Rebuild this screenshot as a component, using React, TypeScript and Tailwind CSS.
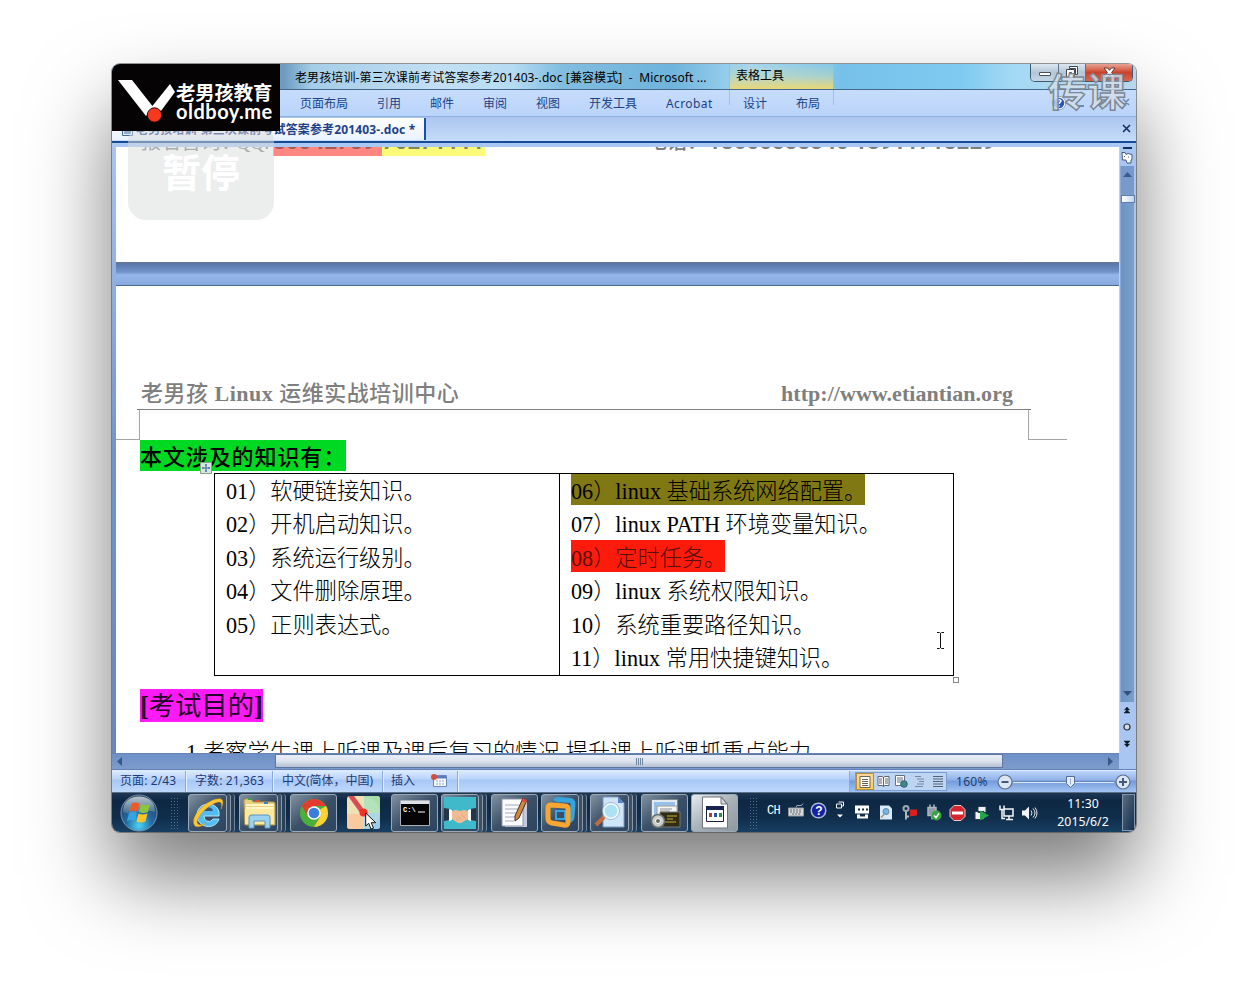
import React from 'react';

type Kids = { children?: React.ReactNode };

const UI = "font-['Noto_Sans','Noto_Sans_CJK_SC',sans-serif]";
const SERIF = "font-['Liberation_Serif','Noto_Sans_CJK_SC',serif]";

function Logo() {
  return (
    <div className="absolute left-0 top-0 z-20 flex h-[67px] w-[168px] rounded-tl-[8px] bg-[#060304] pl-[5px]">
      <svg className="mt-[15px] h-[46px] w-[60px] shrink-0" viewBox="0 0 60 46">
        <path d="M1 1h14l22 28-8 8z" fill="#fff" />
        <path d="M53 5l5 8-17 23-8-6z" fill="#fff" />
        <circle cx="37.500" cy="36" r="7.200" fill="#f8371f" stroke="#210808" />
      </svg>
      <div className="-ml-[1px] pt-[18px] text-white">
        <div className="whitespace-nowrap font-['Noto_Sans_CJK_SC',sans-serif] text-[19.3px] font-bold leading-[20px]">老男孩教育</div>
        <div className="whitespace-nowrap font-['Lato',sans-serif] text-[20px] font-bold leading-[19px] tracking-[0.5px]">oldboy.me</div>
      </div>
    </div>
  );
}

function PauseBadge() {
  return (
    <div className="absolute left-[16px] top-[60px] z-10 flex h-[96px] w-[146px] items-start justify-center rounded-[18px] bg-[#d9dbdc]/50 pt-[25px]">
      <span className="font-['Noto_Sans_CJK_SC',sans-serif] text-[39px] font-bold leading-[42px] text-white">暂停</span>
    </div>
  );
}

function TitleBar() {
  return (
    <div className="flex h-[26px] shrink-0 border-b border-[#45688f] bg-[linear-gradient(90deg,#78b9df_0px,#6d9cc0_172px,#a5cde8_200px,#c4e0f3_330px,#b5dcf2_400px,#81bde0_450px,#6fb4dc_560px,#a6d8f3_640px,#76c1ea_730px,#7fcaf1_850px,#a4d9f4_900px,#b9d7ec_1024px)]">
      <div className={`${UI} w-[617px] whitespace-pre pl-[183px] pt-[5px] text-[12px] leading-[18px] tracking-[0.11px] text-black`}>老男孩培训-第三次课前考试答案参考201403-.doc [兼容模式]  -  Microsoft ...</div>
      <div className={`${UI} w-[105px] border-x border-[#9dbdd5] bg-gradient-to-b from-[#9fcfe0]/30 via-[#c6d8b3]/60 to-[#e9d875] pl-[6px] pt-[3px] text-[12px] leading-[18px] text-black`}>表格工具</div>
      <div className="ml-[196px] flex h-[18px] w-[103px] overflow-hidden rounded-b-[5px] border border-t-0 border-[#43586d]">
        <div className="flex w-[28px] items-center justify-center border-r border-[#5e7387] bg-gradient-to-b from-[#dce7f0] via-[#b4c6d5] to-[#c5d7e6]">
          <div className="mt-[3px] h-[4px] w-[12px] rounded-[1px] border border-[#43505d] bg-white" />
        </div>
        <div className="flex w-[27px] items-center justify-center border-r border-[#5e7387] bg-gradient-to-b from-[#dce7f0] via-[#b4c6d5] to-[#c5d7e6] pb-[2px]">
          <svg width="12" height="12" viewBox="0 0 12 12"><path d="M3.500.500h8v8h-2v-6h-6zM.500 3.500h8v8h-8z" fill="#fff" stroke="#3c4753" /><path d="M3.500 6.500h2v2h-2z" fill="#b4c6d5" stroke="#3c4753" /></svg>
        </div>
        <div className="flex flex-1 items-center justify-center bg-gradient-to-b from-[#e5a294] via-[#cc422c] to-[#d9634c] pb-px">
          <svg width="13" height="11" viewBox="0 0 13 11"><path d="M1 1h3.500l2 2.300L8.500 1H12L8.600 5.500 12 10H8.500l-2-2.300L4.500 10H1l3.400-4.500z" fill="#fff" stroke="#55302b" strokeWidth=".9" /></svg>
        </div>
      </div>
    </div>
  );
}

function RibbonTabs() {
  return (
    <div className={`${UI} flex h-[27px] shrink-0 border-b border-[#8fb0df] bg-gradient-to-b from-[#c7dcfb] to-[#b9d4fa] pl-[188px] text-[12px] leading-[27px] text-[#1d4285]`}>
      <span className="w-[77px]">页面布局</span>
      <span className="w-[53px]">引用</span>
      <span className="w-[53px]">邮件</span>
      <span className="w-[53px]">审阅</span>
      <span className="w-[53px]">视图</span>
      <span className="w-[77px]">开发工具</span>
      <span className="w-[63px] tracking-[0.4px]">Acrobat</span>
      <div className="flex h-[15px] w-[105px] shrink-0 border-x border-[#a2bfe2] pl-[13px]">
        <span className="w-[53px]">设计</span>
        <span>布局</span>
      </div>
      <svg className="ml-[210px] mt-[6px] shrink-0" width="90" height="16" viewBox="0 0 90 16">
        <circle cx="15" cy="7" r="6" fill="#2757bd" stroke="#fff" strokeWidth="1.500" />
        <circle cx="15" cy="7" r="6.700" fill="none" stroke="#5272ab" strokeWidth=".6" />
        <path d="M13 5q2-3 4 0c0 1-2 1.500-2 3m0 1.200v1.500" stroke="#fff" strokeWidth="1.500" fill="none" />
        <path d="M33 10h7" stroke="#52709f" strokeWidth="1.500" />
        <path d="M56 4h6v6h-6zM79 3l6 6m0-6l-6 6" stroke="#6c87ad" strokeWidth="1.500" fill="none" />
      </svg>
    </div>
  );
}

function DocTabs() {
  return (
    <div className="flex h-[26px] shrink-0 border-b-2 border-[#164a94] bg-gradient-to-b from-[#abc6ee] to-[#c5dbf9] pt-[1px]">
      <div className={`${UI} flex h-[22px] w-[314px] items-center whitespace-nowrap border-r-2 border-[#164fae] bg-gradient-to-b from-white to-[#e9f2ff] pt-px text-[12px] font-bold tracking-[0.14px] text-[#1f4286]`}>
        <svg className="ml-[7px] mr-[3px] shrink-0" width="14" height="14" viewBox="0 0 14 14"><path d="M3.500 3.500h10v9h-10zM.500.500h9v7h-9z" fill="#e8f0fc" stroke="#44689f" /><path d="M5 8h7m-7 2h7" stroke="#44689f" /></svg>
        <span>老男孩培训-第三次课前考试答案参考201403-.doc *</span>
      </div>
      <svg className="ml-[696px] mt-[6px]" width="10" height="10" viewBox="0 0 10 10"><path d="M1 1l7 7m0-7L1 8" stroke="#12305f" strokeWidth="1.600" /></svg>
    </div>
  );
}

function Watermark() {
  return (
    <div className="absolute left-[936px] top-[2px] z-20 whitespace-nowrap font-['Noto_Sans_CJK_SC',sans-serif] text-[39px] font-bold leading-[46px] text-[#d3dfec]/80 [-webkit-text-stroke:1.4px_#7b8794]">传课</div>
  );
}

function Row({ children }: Kids) {
  return <div className="flex h-[33.4px] items-start">{children}</div>;
}

function Line({ children }: Kids) {
  return <span className="h-[31px] whitespace-pre leading-[36px]">{children}</span>;
}

function Page() {
  return (
    <div className={`${SERIF} flex h-[606px] w-[1003px] shrink-0 flex-col overflow-hidden bg-white`}>
      <div className="h-[115px] shrink-0 overflow-hidden">
        <div className="-mt-[22px] flex h-[31px] pl-[25px] font-['Roboto','Noto_Sans_CJK_SC',sans-serif] text-[22.3px] font-bold leading-[34px] text-[#7d7d7d]">
          <span className={`${SERIF} w-[95px] whitespace-nowrap text-[20px] font-normal`}>报名咨询：</span>
          <span className={`${SERIF} w-[37px] whitespace-nowrap text-[20px] font-normal tracking-[-0.5px]`}>QQ:</span>
          <span className="w-[109px] whitespace-nowrap bg-[#fe8781] leading-[32px] text-[#a55a57]">80042789</span>
          <span className="w-[103px] whitespace-nowrap bg-[#fcfb79] leading-[32px] text-[#85855a]">70271111</span>
          <span className={`${SERIF} ml-[162px] w-[61px] whitespace-nowrap text-[20px] font-medium`}>电话：</span>
          <span className="whitespace-nowrap leading-[32px]">18600338340 18911718229</span>
        </div>
      </div>
      <div className="h-[24px] shrink-0 border-b border-t border-b-[#4c6793] border-t-[#6d7787] bg-[linear-gradient(180deg,#5875a6_0px,#7093ca_9px,#96b7ec_12px,#86a9df_22px)]" />
      <div className="flex h-[123px] shrink-0 items-end justify-between pl-[25px] pr-[106px] text-[22px] font-medium leading-[30px] text-[#7f7f7f]">
        <span className="whitespace-nowrap tracking-[0.5px]">老男孩 <b>Linux</b> 运维实战培训中心</span>
        <b className="whitespace-nowrap tracking-[0.04px]">http://www.etiantian.org</b>
      </div>
      <div className="ml-[21px] h-px w-[894px] shrink-0 bg-[#808080]" />
      <div className="flex h-[30px] shrink-0">
        <div className="w-[24px] border-b border-r border-[#a5a5a5]" />
        <div className="w-[888px]" />
        <div className="w-[39px] border-b border-l border-[#a5a5a5]" />
      </div>
      <div className="ml-[24px] h-[31px] w-[206px] shrink-0 whitespace-nowrap bg-[#00d921] text-[22px] font-medium leading-[35px] tracking-[0.9px] text-black">本文涉及的知识有：</div>
      <div className="ml-[98px] mt-[2px] flex h-[203px] w-[740px] shrink-0 border border-black text-[22.2px] font-light text-black">
        <div className="w-[345px] border-r border-black pl-[11px]">
          <Row><Line>01）软硬链接知识。</Line></Row>
          <Row><Line>02）开机启动知识。</Line></Row>
          <Row><Line>03）系统运行级别。</Line></Row>
          <Row><Line>04）文件删除原理。</Line></Row>
          <Row><Line>05）正则表达式。</Line></Row>
        </div>
        <div className="pl-[11px]">
          <Row><div className="h-[31px] w-[294px] bg-[#807813]"><Line>06）linux 基础系统网络配置。</Line></div></Row>
          <Row><Line>07）linux PATH 环境变量知识。</Line></Row>
          <Row><div className="-mt-px h-[32px] w-[154px] bg-[#ff1b0c] pt-px text-[#54100b]"><Line>08）定时任务。</Line></div></Row>
          <Row><Line>09）linux 系统权限知识。</Line></Row>
          <Row><Line>10）系统重要路径知识。</Line></Row>
          <Row><Line>11）linux 常用快捷键知识。</Line></Row>
        </div>
      </div>
      <div className="ml-[24px] mt-[13px] h-[33px] w-[123px] shrink-0 whitespace-nowrap bg-[#ff1bf8] text-[26.300px] leading-[35px] text-[#25042b]"><b>[</b>考试目的<b>]</b></div>
      <div className="ml-[70px] mt-[12px] shrink-0 whitespace-nowrap text-[22.200px] font-light leading-[38px] tracking-[0.13px] text-black">1.考察学生课上听课及课后复习的情况,提升课上听课抓重点能力</div>
    </div>
  );
}

function VScroll() {
  return (
    <div className="flex w-[16px] flex-col items-center bg-[#a9c6f2] pr-[2px]">
      <div className="h-[2px] w-[9px] shrink-0 bg-[#12305f]" />
      <svg className="my-[2px] h-[13px] shrink-0" width="12" height="13" viewBox="0 0 12 13"><path d="M1 1.500h3l1 2 2-1 4 1v5l-1 .5v3H6l-1-3H1.500z" fill="#fff" stroke="#44597f" /><path d="M3.500 5v1m4-.5v1" stroke="#44597f" /></svg>
      <div className="flex h-[536px] w-[14px] shrink-0 flex-col items-center border-l border-[#89a9dc] bg-gradient-to-r from-[#6b93c7] to-[#7ba0c7]">
        <div className="flex h-[29px] w-full justify-center bg-gradient-to-b from-[#7698ce] to-[#7a9ac7] pt-[6px]"><svg width="9" height="5"><path d="M0 5l4.500-5L9 5z" fill="#3d5a8c" /></svg></div>
        <div className="h-[8px] w-[14px] border border-[#5e7dac] bg-gradient-to-r from-white to-[#c3d6ef]" />
        <div className="flex-1" />
        <svg className="mb-[6px]" width="9" height="5"><path d="M0 0l4.500 5L9 0z" fill="#33507f" /></svg>
      </div>
      <svg className="shrink-0" width="12" height="50" viewBox="0 0 12 50">
        <path d="M6 5L8.500 8h-5zM6 8l3 3H3zM6 45L3.500 42h5zM6 42l-3-3h6z" fill="#101820" stroke="#101820" strokeWidth=".5" />
        <circle cx="6" cy="25" r="3" fill="#d9dde2" stroke="#29323d" strokeWidth="1.200" />
      </svg>
    </div>
  );
}

function HScroll() {
  return (
    <div className="flex h-[17px] shrink-0 border-b border-[#6182b8] bg-[#a9c6f2]">
      <div className="flex w-[1007px] items-center border-t border-[#6784b5] bg-gradient-to-b from-[#6d90c6] to-[#7c9ccb] pb-[1px]">
        <svg className="ml-[5px]" width="5" height="9"><path d="M5 0v9L0 4.500z" fill="#385688" /></svg>
        <div className="ml-[153px] flex h-[14px] w-[728px] items-center justify-center gap-[1px] border border-[#5a76a3] bg-gradient-to-b from-[#e9eef8] via-[#dde4ee] to-[#b5c0d1]">
          <i className="h-[7px] w-px bg-[#71849f]" /><i className="h-[7px] w-px bg-[#71849f]" /><i className="h-[7px] w-px bg-[#71849f]" /><i className="h-[7px] w-px bg-[#71849f]" />
        </div>
        <svg className="ml-[105px]" width="5" height="9"><path d="M0 0v9l5-4.500z" fill="#385688" /></svg>
      </div>
    </div>
  );
}

function StatusBar() {
  const sep = 'h-full shrink-0 border-r border-[#8aabd9] shadow-[1px_0_0_#e5f0ff]';
  return (
    <div className={`${UI} flex h-[22px] shrink-0 whitespace-nowrap border-t border-[#ddeaff] bg-[linear-gradient(180deg,#dae9ff_0px,#bad4fb_8px,#a8c7f6_9px,#bed8fc_21px)] text-[12px] leading-[20px] text-[#1d3c75]`}>
      <div className={`${sep} w-[74px] pl-[8px] tracking-[0.1px]`}>页面: 2/43</div>
      <div className={`${sep} w-[87px] pl-[9px] tracking-[0.1px]`}>字数: 21,363</div>
      <div className={`${sep} w-[110px] pl-[9px]`}>中文(简体，中国)</div>
      <div className={`${sep} flex w-[75px] pl-[8px]`}>插入
        <svg className="ml-[16px] mt-[3px]" width="16" height="14" viewBox="0 0 16 14"><path d="M2.500 1.500h13v11h-13z" fill="#f4f7fc" stroke="#6b87b8" /><path d="M3 2h12v2.500H3z" fill="#557cc0" /><path d="M5 7h2m1 0h2m1 0h2M5 10h2m1 0h2m1 0h2" stroke="#8fa3c4" /><circle cx="3" cy="3" r="3" fill="#d64b3c" /></svg>
      </div>
      <div className={`${sep} w-[392px]`} />
      <div className="flex flex-1 bg-[linear-gradient(180deg,#bdd5fa_0px,#8fb2e8_9px,#739bdb_10px,#a3c4f3_21px)] pl-[5px] pt-px">
        <div className="flex h-[19px] w-[92px] shrink-0 items-center border border-[#7b9fce] bg-[#bdd4f3]">
          <div className="flex h-full w-[18px] shrink-0 items-center justify-center border border-[#b98d40] bg-gradient-to-b from-[#fbd798] to-[#ffcc4d]">
            <svg width="12" height="12" viewBox="0 0 12 12" className="shrink-0"><path d="M1 .500h10v11H1z" fill="#fff" stroke="#72664f" /><path d="M3 3.500h6M3 5.500h6M3 7.500h6M3 9.500h6" stroke="#675f50" /></svg>
          </div>
          <svg className="shrink-0" width="72" height="13" viewBox="0 0 72 13">
            <path d="M4 1.500h4l1.500 1 1.500-1h4v9h-4l-1.500 1-1.500-1H4z" fill="#fff" stroke="#5a6371" /><path d="M9.500 2v9M5 4h3M5 6h3M5 8h3M11 4h3M11 6h3M11 8h3" stroke="#5a6371" />
            <path d="M21.500.500h9v10h-9z" fill="#fff" stroke="#667080" /><path d="M23 3h6M23 5h6M23 7h4" stroke="#667080" /><circle cx="30" cy="9" r="3.300" fill="#3e8a79" stroke="#315f95" />
            <path d="M41 1.500h6M43 4h7M45 6.500h5M43 9h7M41 11.500h8" stroke="#7686a0" />
            <path d="M59 1.500h10M59 4h10M59 6.500h10M59 9h10M59 11.500h10" stroke="#52627b" />
          </svg>
        </div>
        <span className="w-[50px] shrink-0 pl-[9px] text-[12px] leading-[19px] tracking-[0.3px]">160%</span>
        <svg className="shrink-0" width="136" height="20" viewBox="0 0 136 20">
          <path d="M16 10.500h101" stroke="#dceaff" /><path d="M16 9.500h101" stroke="#6486b8" />
          <circle cx="8" cy="10" r="7" fill="#dce6f3" stroke="#5b6f8e" strokeWidth="1.200" /><path d="M4.500 10h7" stroke="#465a78" strokeWidth="2" />
          <circle cx="126" cy="10" r="7" fill="#dce6f3" stroke="#5b6f8e" strokeWidth="1.200" /><path d="M122 10h8m-4-4v8" stroke="#465a78" strokeWidth="2" />
          <path d="M69.500 4.500h8v7l-4 4-4-4z" fill="#e4edf9" stroke="#536f9f" /><path d="M73.500 6.500v6" stroke="#9ab0d2" />
        </svg>
      </div>
    </div>
  );
}

function Grip() {
  return <div className="h-[32px] w-[9px] bg-[radial-gradient(circle,#8197ac_0.7px,transparent_1px)] bg-[length:3px_3px] opacity-60" />;
}

function TaskButton({ w, stack, active, children }: Kids & { w: string; stack?: boolean; active?: boolean }) {
  return (
    <div className="flex h-[38px] shrink-0">
      <div className={`${w} flex items-center justify-center rounded-[3px] border border-[#9ba9b6] ${active ? 'bg-gradient-to-br from-[#e7ebee] via-[#a9b2b9] to-[#8e989f]' : 'bg-gradient-to-br from-[#8292a2] via-[#3b5067] to-[#2c4561]'}`}>
        {children}
      </div>
      {stack && <><div className="w-[4px] rounded-r-[3px] border-r border-[#8a99a8] bg-[#3d5064]" /><div className="w-[4px] rounded-r-[3px] border-r border-[#71849a] bg-[#2a4058]" /></>}
    </div>
  );
}

function StartOrb() {
  return (
    <svg width="40" height="38" viewBox="0 0 40 38">
      <defs><radialGradient id="orb" cx=".5" cy=".85" r=".8"><stop offset="0" stopColor="#50d3f5" /><stop offset=".45" stopColor="#216ca7" /><stop offset="1" stopColor="#263f5b" /></radialGradient><linearGradient id="gloss" x2="0" y2="1"><stop stopColor="#fff" stopOpacity=".7" /><stop offset="1" stopColor="#fff" stopOpacity=".12" /></linearGradient></defs>
      <circle cx="20" cy="19" r="18" fill="url(#orb)" stroke="#7793ab" />
      <path d="M4 18Q4 3 20 2.500 36 3 36 18q-8-3-16 0t-16 0z" fill="url(#gloss)" />
      <path d="M12.500 9.500q4-2 8 0l-2 8q-4-2-8 0z" fill="#ed5a28" /><path d="M22 10q4 2 9 0l-2 8q-5 2-9 0z" fill="#8bc540" />
      <path d="M10 19q4-2 8 0l-2 8q-4-2-8 0z" fill="#32a5e2" /><path d="M19.500 19.500q4 2 9 0l-2 8q-5 2-9 0z" fill="#fcc425" />
    </svg>
  );
}

function Taskbar() {
  return (
    <div className="flex h-[40px] shrink-0 items-center border-t border-[#5c7187] bg-[linear-gradient(180deg,#1d3654_0px,#0e2844_8px,#102d4b_24px,#183f61_39px)]">
      <div className="flex w-[76px] items-center pl-[7px]"><StartOrb /><div className="ml-[11px]"><Grip /></div></div>
      <div className="w-[51px]"><TaskButton w="w-[39px]" stack>
        <svg width="34" height="34" viewBox="0 0 34 34"><path d="M28 20H13c0 6 7 7 9 3h6c-4 12-22 9-22-4S25 4 28 16z" fill="#54bcf1" stroke="#b0e7ff" /><path d="M13 15h9c-1-5-8-5-9 0z" fill="#365a7c" /><path d="M4 30C-3 21 18 1 30 3c3 1 2 6 0 10 1-4 1-7-2-7C20 6 2 23 7 28c2 2 5 0 8-1-4 3-8 5-11 3z" fill="#fcc735" stroke="#d99519" strokeWidth=".5" /></svg>
      </TaskButton></div>
      <div className="w-[51px]"><TaskButton w="w-[39px]" stack>
        <svg width="34" height="32" viewBox="0 0 34 32"><path d="M2 4q0-2 2-2h5l2 3h20q2 0 2 2v21H3z" fill="#e9d27e" stroke="#b99b4b" /><path d="M4 8h28M4 11h28" stroke="#fff5c8" strokeWidth="2" /><path d="M3 12h29v15H3z" fill="#fbe99f" /><path d="M6 2h4" stroke="#40a34a" strokeWidth="2" /><path d="M14 4h4" stroke="#d95636" strokeWidth="2" /><path d="M22 6h4" stroke="#427dbd" strokeWidth="2" /><path d="M7 31V20q0-2 3-2h15q3 0 3 2v11h-5v-7H12v7z" fill="#9bd2ef" stroke="#5895bf" /></svg>
      </TaskButton></div>
      <div className="w-[54px]"><TaskButton w="w-[47px]">
        <svg width="30" height="30" viewBox="0 0 30 30"><circle cx="15" cy="15" r="14" fill="#4caf3c" /><path d="M15 15L2.900 8A14 14 0 0 1 27.100 8H15z" fill="#e33b2e" /><path d="M15 15L27.100 8A14 14 0 0 1 15 29l6-10z" fill="#fbd235" /><path d="M2.900 8L9 18l6-9.500z" fill="#e33b2e" /><circle cx="15" cy="15" r="6.800" fill="#fff" /><circle cx="15" cy="15" r="5.300" fill="#397ddd" /></svg>
      </TaskButton></div>
      <div className="w-[47px] pl-[3px]">
        <svg width="33" height="33" viewBox="0 0 33 33"><rect width="33" height="33" rx="3" fill="#eee2b5" /><path d="M17 0h13q3 0 3 3v14H17z" fill="#a8dfa9" /><path d="M17 17h16v13q0 3-3 3H17z" fill="#9bcdeb" /><path d="M0 18h17v15H3q-3 0-3-3z" fill="#f8ca9e" /><path d="M17 1a16 16 0 0 1 0 32z" fill="#c5e6d7" opacity=".4" /><path d="M1 0h6l11 15-4 3z" fill="#d94b55" /><circle cx="16.500" cy="16.500" r="4" fill="#ee3328" /></svg>
      </div>
      <div className="w-[50px]"><TaskButton w="w-[47px]">
        <svg width="30" height="26" viewBox="0 0 30 26"><path d="M.500.500h29v25H.500z" fill="#050505" stroke="#aab0b5" /><path d="M1 1h28v3H1z" fill="#dde2e6" /><text x="3" y="12" fontFamily="Liberation Mono, monospace" fontSize="7" fontWeight="bold" fill="#fff">C:\</text><path d="M18 12h7" stroke="#fff" /></svg>
      </TaskButton></div>
      <div className="w-[50px]"><TaskButton w="w-[38px]" stack>
        <svg width="32" height="32" viewBox="0 0 32 32"><path d="M0 0h32v32H0z" fill="#40b9cb" /><path d="M0 11l6 1v11l-6 1zM32 11l-6 1v11l6 1z" fill="#263447" /><path d="M5 12l3 1v10l-3 1zM27 12l-3 1v10l3 1z" fill="#fff" /><path d="M8 14l4-1 4 1 4-1 4 1v8l-7 4h-3l-6-4z" fill="#f1bc94" /><path d="M17 17l4 4m-7-2l3 4m-5-2l3 3" stroke="#d79a74" strokeWidth=".7" /></svg>
      </TaskButton></div>
      <div className="w-[50px]"><TaskButton w="w-[47px]">
        <svg width="30" height="32" viewBox="0 0 30 32"><path d="M5 4h22v26H5z" fill="#c4c9df" /><path d="M2 2h21v27H2z" fill="#fbfbfe" stroke="#9297aa" /><path d="M5 8h14M5 12h13M5 16h13M5 20h11M5 24h9" stroke="#a2a8c0" /><path d="M23 1l4 2-8 18-4 3 0-5z" fill="#d1873c" stroke="#4b2f23" /><path d="M23 1l4 2-1 3-4-2z" fill="#d74b47" /></svg>
      </TaskButton></div>
      <div className="w-[49px]"><TaskButton w="w-[38px]" stack>
        <svg width="32" height="32" viewBox="0 0 32 32"><path d="M11 4q1-1.500 3-1.500l12 1q3 0 3 4l-1 12q0 3-3 4" fill="none" stroke="#35a4df" strokeWidth="5" strokeLinejoin="round" /><path d="M12 14h9v8h-9z" fill="none" stroke="#35a4df" strokeWidth="2" /><path d="M4 11q0-3 3-3l14 1q3 0 3 3v13q0 4-4 3L8 26q-4-1-4-4z" fill="none" stroke="#f7a632" strokeWidth="5" strokeLinejoin="round" /></svg>
      </TaskButton></div>
      <div className="w-[51px]"><TaskButton w="w-[39px]" stack>
        <svg width="32" height="34" viewBox="0 0 32 34"><path d="M9 1h15l6 6v24H9z" fill="#cfe5fa" stroke="#7898c3" /><path d="M24 1v6h6z" fill="#5984c5" /><circle cx="17" cy="15" r="7.500" fill="#ade2f5" stroke="#f4f9fc" strokeWidth="2" /><circle cx="17" cy="15" r="8.500" fill="none" stroke="#7395ad" strokeWidth=".6" /><path d="M10 21l-8 8" stroke="#c4693c" strokeWidth="4" /></svg>
      </TaskButton></div>
      <div className="w-[50px]"><TaskButton w="w-[47px]">
        <svg width="32" height="32" viewBox="0 0 32 32"><path d="M2.500 2.500h26v19h-26z" fill="#e2e9ef" stroke="#7b858c" /><path d="M5 5h21v13H5z" fill="#98c1ea" /><path d="M8 9h20v9H8z" fill="#f5f5f1" stroke="#9c9c9c" /><path d="M11 12h12M11 14h10" stroke="#8c9297" /><path d="M11 15h20v15H11z" fill="#312c16" stroke="#777" /><path d="M18 19h10M18 22h6M16 25h11" stroke="#cdae37" /><circle cx="9" cy="24" r="6.500" fill="#c9ccc8" stroke="#65706e" strokeWidth="1.500" /><circle cx="9" cy="24" r="2.500" fill="#626865" stroke="#fff" /></svg>
      </TaskButton></div>
      <div className="w-[58px]"><TaskButton w="w-[47px]" active>
        <svg width="28" height="33" viewBox="0 0 28 33"><path d="M1.500 1h19l6 7v24h-25z" fill="#fff" stroke="#70757b" /><path d="M20 1v7h6z" fill="#d9dce0" stroke="#70757b" /><path d="M5.500 10.500h17v15h-17z" fill="#fff" stroke="#18203e" /><path d="M5 10h18v4H5z" fill="#192254" /><path d="M8 17h3v4H8z" fill="#b6373c" /><path d="M13 17h3v4h-3z" fill="#2855a0" /><path d="M18 17h3v4h-3z" fill="#259047" /></svg>
      </TaskButton></div>
      <Grip />
      <div className="ml-[9px] w-[19px] pb-[3px] font-['Liberation_Mono',monospace] text-[12px] leading-[14px] tracking-[-0.8px] text-white">CH</div>
      <svg width="262" height="36" viewBox="786 794.5 262 36">
        <path d="M788.500 807.500h15v8h-15z" fill="#d6d8d8" stroke="#91999e" /><path d="M790 809.500h12M790 811.500h12M792 813.500h8" stroke="#616a70" strokeDasharray="2 1" /><path d="M796 807q0-3 3-2t4-2" fill="none" stroke="#9facb8" />
        <circle cx="818.500" cy="810" r="7.300" fill="#1620a5" stroke="#a9b7d5" strokeWidth="1.500" /><text x="815.300" y="814.500" fontFamily="Liberation Sans, sans-serif" fontSize="12" fontWeight="bold" fill="#fff">?</text>
        <path d="M838.500 801.500h5v4h-2m-5-2h5v4h-5z" fill="none" stroke="#f4f8fb" /><path d="M837 814h6l-3 3z" fill="#fff" />
        <path d="M855 805h14v8h-14zM857 814v4h11v-4h-3v2h-5v-2z" fill="#fff" /><path d="M858 809h2m2 0h2m2 0h2" stroke="#13273d" strokeWidth="2" />
        <path d="M880 805h9l3 3v11h-12z" fill="#d9eaf8" /><circle cx="886" cy="811" r="3" fill="#79b4dc" stroke="#5d89ad" /><path d="M884 814l-3 3" stroke="#b18e65" strokeWidth="1.500" />
        <circle cx="906" cy="808" r="2.500" fill="none" stroke="#9eaab2" strokeWidth="2" /><path d="M906 811v8m0-3h3" stroke="#aeb9bf" strokeWidth="2" /><path d="M910 809h7v6l-7 1z" fill="#d62120" />
        <path d="M928 807h8v8h-8zM930 804v3m4-3v3m-2 8v4" fill="#929da5" stroke="#aeb8bd" strokeWidth="1.500" /><circle cx="936.500" cy="815" r="5" fill="#39a542" /><path d="M934 815l2 2 3-4" stroke="#fff" strokeWidth="1.500" fill="none" />
        <path d="M954 805h7l4 4v7l-4 4h-7l-4-4v-7z" fill="#d2272f" stroke="#eec9ca" /><path d="M952 812.500h11" stroke="#fff" strokeWidth="3" />
        <path d="M978 806h8v6h-8zM975 811h9v8h-9z" fill="#edf2f5" stroke="#253a4c" /><path d="M980 810l9 5-9 5z" fill="#27a54c" />
        <path d="M1004 808.500h9v7h-9zM1006 819h7m-4-3v3M1000 805v4h4v-4m-2 4v9h3" fill="none" stroke="#f4f8fa" strokeWidth="1.500" />
        <path d="M1022 810h3l4-4v13l-4-4h-3z" fill="#f1f4f6" /><path d="M1031 810q2 2.500 0 5m2-7q4 4.500 0 9m2-10q4 5.500 0 11" fill="none" stroke="#e1eaf1" />
      </svg>
      <div className={`${UI} w-[70px] text-center text-[12.300px] leading-[18px] text-white`}><div>11:30</div><div>2015/6/2</div></div>
      <div className="ml-[4px] h-[37px] w-[13px] border border-[#8297ad] bg-gradient-to-br from-[#5b6c80] to-[#142f4c]" />
    </div>
  );
}

export default function App() {
  return (
    <main className="h-[992px] w-[1248px] overflow-hidden bg-white pl-[112px] pt-[64px]">
      <section className="relative flex h-[768px] w-[1024px] flex-col rounded-[8px] shadow-[0_0_0_1px_rgba(70,70,70,0.55),0_45px_82px_rgba(0,0,0,0.52)]">
        <div className="flex h-full w-full flex-col overflow-hidden rounded-[8px]">
          <TitleBar />
          <RibbonTabs />
          <DocTabs />
          <div className="h-[4px] shrink-0 bg-[#a9c8f4]" />
          <div className="flex h-[606px] shrink-0">
            <div className="w-[4px] shrink-0 bg-gradient-to-b from-[#a9c6f2] via-[#7095ce] to-[#6488bb]" />
            <Page />
            <div className="w-px bg-[#b5cff5]" />
            <VScroll />
          </div>
          <HScroll />
          <StatusBar />
          <Taskbar />
          <Logo />
        </div>
        <PauseBadge />
        <Watermark />
        <svg className="absolute left-[88px] top-[398px]" width="12" height="12" viewBox="0 0 12 12"><path d="M.500.500h11v11H.500z" fill="#d8e6d9" stroke="#88a18a" /><path d="M6 2v8M2 6h8M5 3h2M5 9h2M3 5v2M9 5v2" stroke="#346ba9" /></svg>
        <div className="absolute left-[841px] top-[613px] h-[6px] w-[6px] border border-[#858585] bg-white" />
        <svg className="absolute left-[824px] top-[568px]" width="9" height="17" viewBox="0 0 9 17"><path d="M1 .500h2.500l1 1 1-1H8M4.500 1v15M1 16.500h2.500l1-1 1 1H8" fill="none" stroke="#111" /></svg>
        <svg className="absolute left-[253px] top-[748px]" width="12" height="18" viewBox="0 0 12 18"><path d="M.700 1v13l3-2.700L6 17l2.500-1-2.300-5.300h4.500z" fill="#fff" stroke="#111" /></svg>
      </section>
    </main>
  );
}
